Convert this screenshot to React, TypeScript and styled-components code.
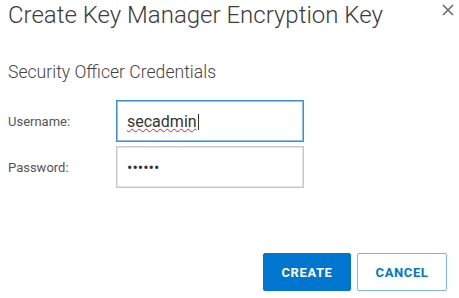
import React from "react";
import styled, { createGlobalStyle } from "styled-components";

const Global = createGlobalStyle`
  html, body { margin: 0; padding: 0; background: #fff; }
  body { font-family: Roboto, "Liberation Sans", Arial, sans-serif; }
  * { box-sizing: border-box; }
`;

const Dialog = styled.div`
  width: 459px;
  height: 298px;
  display: flex;
  flex-direction: column;
  padding: 1px 12px 0 8px;
  background: #fff;
`;

const Header = styled.div`
  display: flex;
  align-items: flex-start;
  justify-content: space-between;
`;

const Title = styled.h1`
  margin: 0;
  font-size: 24px;
  font-weight: 300;
  color: #3b3b3b;
  line-height: 28px;
  white-space: nowrap;
`;

const CloseButton = styled.button`
  border: none;
  background: none;
  padding: 0;
  margin: 2px -7px 0 0;
  width: 13px;
  height: 13px;
  display: flex;
  align-items: center;
  justify-content: center;
  cursor: pointer;
`;

const Section = styled.h2`
  margin: 33px 0 0 0;
  font-size: 17.6px;
  font-weight: 300;
  color: #444;
  line-height: 21px;
`;

const Form = styled.div`
  display: flex;
  flex-direction: column;
  gap: 4px;
  margin-top: 17px;
`;

const Row = styled.label`
  display: flex;
  align-items: center;
`;

const Label = styled.span`
  width: 108px;
  font-size: 13px;
  color: #555;
`;

const Field = styled.span`
  position: relative;
  display: block;
`;

const Input = styled.input<{ $focused?: boolean }>`
  display: block;
  width: 188px;
  height: 42px;
  padding: 0 10px;
  font-family: Roboto, "Liberation Sans", Arial, sans-serif;
  font-size: 16px;
  color: #333;
  outline: none;
  border-radius: 0;
  border: 1px solid ${(p) => (p.$focused ? "#3d8fdb" : "#c9c9c9")};
  box-shadow: ${(p) => (p.$focused ? "inset 0 0 0 1px #8ec0ec" : "inset 0 0 0 1px #e2e2e2")};
`;

const SpellMark = styled.span`
  position: absolute;
  left: 11px;
  top: 0;
  height: 42px;
  line-height: 42px;
  font-size: 16px;
  color: transparent;
  pointer-events: none;
  text-decoration: underline wavy #e02020;
  text-decoration-thickness: 1px;
  text-underline-offset: 2px;
  white-space: pre;

  &::after {
    content: "";
    position: absolute;
    right: -2px;
    top: 14px;
    width: 1px;
    height: 16px;
    background: #333;
  }
`;

const Footer = styled.div`
  display: flex;
  justify-content: flex-end;
  gap: 6px;
  margin-top: 65px;
`;

const Button = styled.button<{ $primary?: boolean }>`
  height: 38px;
  min-width: ${(p) => (p.$primary ? "88px" : "90px")};
  padding: 0 16px;
  border-radius: 2px;
  font-family: Roboto, "Liberation Sans", Arial, sans-serif;
  font-size: 13px;
  font-weight: 700;
  letter-spacing: 0.6px;
  cursor: pointer;
  background: ${(p) => (p.$primary ? "#0076ce" : "#fff")};
  color: ${(p) => (p.$primary ? "#fff" : "#0076ce")};
  border: 1px solid ${(p) => (p.$primary ? "#0076ce" : "#7fb3e3")};
`;

export default function App() {
  return (
    <>
      <Global />
      <Dialog>
        <Header>
          <Title>Create Key Manager Encryption Key</Title>
          <CloseButton aria-label="Close">
            <svg width="12" height="12" viewBox="0 0 12 12">
              <path d="M1 1 L11 11 M11 1 L1 11" stroke="#6b6b6b" strokeWidth="1.6" />
            </svg>
          </CloseButton>
        </Header>
        <Section>Security Officer Credentials</Section>
        <Form>
          <Row>
            <Label>Username:</Label>
            <Field>
              <Input $focused defaultValue="secadmin" spellCheck={false} />
              <SpellMark aria-hidden="true">secadmin</SpellMark>
            </Field>
          </Row>
          <Row>
            <Label>Password:</Label>
            <Field>
              <Input type="password" defaultValue="secret" />
            </Field>
          </Row>
        </Form>
        <Footer>
          <Button $primary>CREATE</Button>
          <Button>CANCEL</Button>
        </Footer>
      </Dialog>
    </>
  );
}
